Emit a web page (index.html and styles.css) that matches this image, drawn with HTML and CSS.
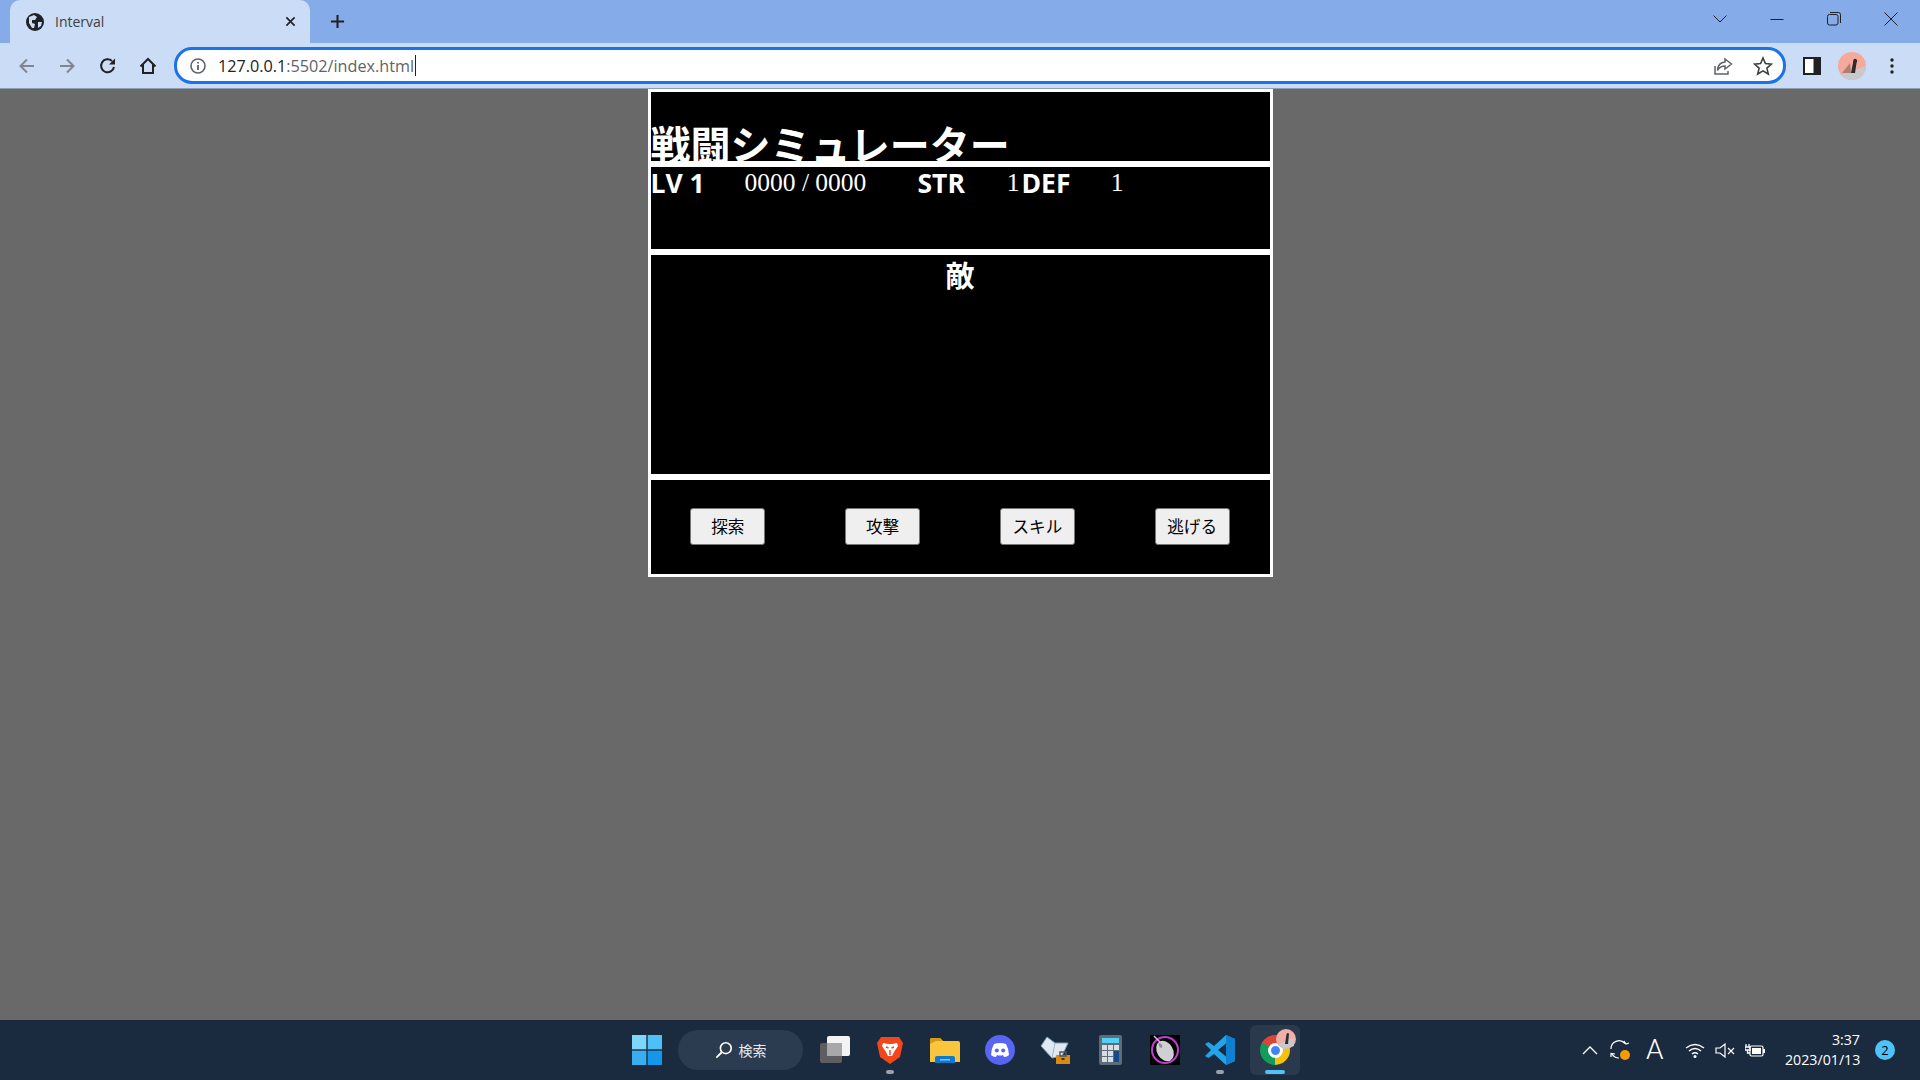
FILE: index.html
```html
<!DOCTYPE html>
<html lang="ja">
  <head>
    <meta charset="UTF-8">
    <title>Interval</title>
    <link rel="stylesheet" href="styles.css">
  </head>
  <body>
    <div class="window">
      <div class="tabbar">
        <div class="tab">
          <svg class="tab-globe" viewBox="0 0 18 18"><circle cx="9" cy="9" r="9" fill="#202124"/><path d="M3 4 L8 2 L11 4 L9 7 L6 7 L6 10 L9 11 L8 15 L6 15 L3 10 Z M12 9 L16 9 L15 13 L12 15 Z" fill="#cbdcf6"/></svg>
          <span class="tab-title">Interval</span>
          <svg class="tab-close" viewBox="0 0 12 12"><path d="M1.5 1.5 L10.5 10.5 M10.5 1.5 L1.5 10.5" stroke="#202124" stroke-width="1.8"/></svg>
        </div>
        <svg class="new-tab" viewBox="0 0 16 16"><path d="M8 1 V15 M1 8 H15" stroke="#202124" stroke-width="2.2"/></svg>
        <div class="window-controls">
          <svg class="win-btn chevron" viewBox="0 0 14 8"><path d="M0.5 0.5 L7 7 L13.5 0.5" fill="none" stroke="#202124" stroke-width="1"/></svg>
          <svg class="win-btn" viewBox="0 0 14 14"><path d="M0.5 7.5 H13.5" stroke="#202124" stroke-width="1"/></svg>
          <svg class="win-btn" viewBox="0 0 14 14"><rect x="0.5" y="2.5" width="10.5" height="10.5" rx="2" fill="none" stroke="#202124"/><path d="M3 0.5 H11.5 Q13.5 0.5 13.5 2.5 V11" fill="none" stroke="#202124"/></svg>
          <svg class="win-btn" viewBox="0 0 14 14"><path d="M0.5 0.5 L13.5 13.5 M13.5 0.5 L0.5 13.5" stroke="#202124" stroke-width="1"/></svg>
        </div>
      </div>
      <div class="toolbar">
        <svg class="tool-icon" viewBox="0 0 20 20"><path d="M17 10 H4 M10 3.5 L3.5 10 L10 16.5" fill="none" stroke="#80868b" stroke-width="2"/></svg>
        <svg class="tool-icon" viewBox="0 0 20 20"><path d="M3 10 H16 M10 3.5 L16.5 10 L10 16.5" fill="none" stroke="#80868b" stroke-width="2"/></svg>
        <svg class="tool-icon" viewBox="0 0 20 20"><path d="M16 11 A6.5 6.5 0 1 1 14 5" fill="none" stroke="#202124" stroke-width="2"/><path d="M17 2.5 V8.5 H11 Z" fill="#202124"/></svg>
        <svg class="tool-icon" viewBox="0 0 20 20"><path d="M2.5 10.5 L10 3 L17.5 10.5 M5 8.5 V17 H15 V8.5" fill="none" stroke="#202124" stroke-width="2"/></svg>
        <div class="omnibox">
          <svg class="info-icon" viewBox="0 0 16 16"><circle cx="8" cy="8" r="7" fill="none" stroke="#5f6368" stroke-width="1.6"/><path d="M8 7 V12 M8 4 V5.6" stroke="#5f6368" stroke-width="1.8"/></svg>
          <span class="url"><span class="url-host">127.0.0.1</span>:5502/index.html</span><span class="caret"></span>
          <svg class="omni-icon share-icon" viewBox="0 0 20 20"><path d="M2 10 V18 H15 V15" fill="none" stroke="#5f6368" stroke-width="1.5"/><path d="M12 3 L18.5 8 L12 13 V10 Q7 10 4.5 14.5 Q5 6.5 12 6 Z" fill="none" stroke="#5f6368" stroke-width="1.5"/></svg>
          <svg class="omni-icon" viewBox="0 0 20 20"><path d="M10 2 L12.4 7.6 L18.5 8.1 L13.9 12.1 L15.3 18 L10 14.9 L4.7 18 L6.1 12.1 L1.5 8.1 L7.6 7.6 Z" fill="none" stroke="#3c4043" stroke-width="1.6"/></svg>
        </div>
        <svg class="panel-icon" viewBox="0 0 18 18"><rect width="18" height="18" fill="#202124"/><rect x="2" y="2" width="8.5" height="14" fill="#fff"/></svg>
        <svg class="avatar" viewBox="0 0 28 28"><defs><clipPath id="avatarClip"><circle cx="14" cy="14" r="14"/></clipPath></defs><g clip-path="url(#avatarClip)"><rect width="28" height="28" fill="#f5a99b"/><path d="M0 24 L28 14 V28 H0 Z" fill="#c9c9cd"/><path d="M4 21 L12 11 L13 21 Z" fill="#b07f70"/><path d="M13 21 L15 11 Q15 6 18 7 Q20 8 18.500 11 L17 21 Z" fill="#2b2b30"/></g></svg>
        <svg class="dots" viewBox="0 0 4 16"><circle cx="2" cy="2" r="1.7" fill="#202124"/><circle cx="2" cy="8" r="1.7" fill="#202124"/><circle cx="2" cy="14" r="1.700" fill="#202124"/></svg>
      </div>

      <main class="page">
        <div class="game">
          <section class="panel title-panel">
            <h1>戦闘シミュレーター</h1>
          </section>
          <section class="panel status-panel">
            <div class="status-row">
              <span class="status-lv">LV 1</span>
              <span class="status-hp">0000 / 0000</span>
              <span class="status-item"><b>STR</b><span class="status-value">1</span></span>
              <span class="status-item"><b>DEF</b><span class="status-value">1</span></span>
            </div>
          </section>
          <section class="panel enemy-panel">
            <h2>敵</h2>
          </section>
          <section class="panel command-panel">
            <button class="command">探索</button>
            <button class="command">攻撃</button>
            <button class="command">スキル</button>
            <button class="command">逃げる</button>
          </section>
        </div>
      </main>

      <footer class="taskbar">
        <div class="task-slot">
          <svg class="task-icon" viewBox="0 0 30 30"><rect width="14.300" height="14.300" fill="#7fd6fb"/><rect x="15.700" width="14.300" height="14.300" fill="#4fc0f6"/><rect y="15.700" width="14.300" height="14.300" fill="#38aef0"/><rect x="15.700" y="15.700" width="14.300" height="14.300" fill="#1297ea"/></svg>
        </div>
        <div class="task-search">
          <svg class="search-icon" viewBox="0 0 20 20"><circle cx="12" cy="8" r="6" fill="none" stroke="#fff" stroke-width="1.800"/><path d="M7.500 12.500 L1.500 18.500" stroke="#fff" stroke-width="2"/></svg>
          <span>検索</span>
        </div>
        <div class="task-slot">
          <svg class="task-icon" viewBox="0 0 30 30"><rect y="8" width="22" height="20" rx="2" fill="#5e5e60"/><rect x="7" y="1" width="23" height="20" rx="2" fill="#f3f3f3"/><rect x="7" y="8" width="15" height="13" fill="#a8a8aa"/></svg>
        </div>
        <div class="task-slot">
          <svg class="task-icon" viewBox="0 0 30 30"><path d="M6 2 H24 L28 8 L25 22 L15 29 L5 22 L2 8 Z" fill="#f1471d"/><path d="M8 8 L13 9 H17 L22 8 L23 11 L19 17 L17 21 H13 L11 17 L7 11 Z" fill="#fff"/><path d="M11 12 L13.500 13 M19 12 L16.500 13 M15 15 V20" stroke="#f1471d" stroke-width="1.500"/></svg>
          <span class="run-dot"></span>
        </div>
        <div class="task-slot">
          <svg class="task-icon" viewBox="0 0 30 30"><path d="M0 5 Q0 3 2 3 H10 L13 6 H28 Q30 6 30 8 V27 H0 Z" fill="#f9c53f"/><path d="M0 5 Q0 3 2 3 H10 L13 6 H6 L0 9 Z" fill="#d69a19"/><path d="M5 23 Q5 21 7 21 H23 Q25 21 25 23 V28 H5 Z" fill="#0f79cf"/><rect x="10" y="24" width="10" height="1.500" fill="#7cc6f5"/></svg>
        </div>
        <div class="task-slot">
          <svg class="task-icon" viewBox="0 0 30 30"><circle cx="15" cy="15" r="15" fill="#5865f2"/><path d="M9 9 Q15 7 21 9 Q24 14 24 20 Q22 22 19 22 L18 20 Q15 21 12 20 L11 22 Q8 22 6 20 Q6 14 9 9 Z" fill="#fff"/><circle cx="11.800" cy="15.500" r="2" fill="#5865f2"/><circle cx="18.200" cy="15.500" r="2" fill="#5865f2"/></svg>
        </div>
        <div class="task-slot">
          <svg class="task-icon" viewBox="0 0 30 30"><path d="M1 11 L7 2 L15 8 L28 8 L22 21 L12 23 Z" fill="#dfe8f3" stroke="#6fa3b8"/><path d="M15 8 L12 23" stroke="#9fb8c8"/><rect x="16" y="20" width="14" height="9" fill="#d98a12"/><rect x="20" y="17" width="6" height="4" fill="none" stroke="#555" stroke-width="1.500"/><rect x="21.500" y="23" width="3" height="2" fill="#4a3205"/></svg>
        </div>
        <div class="task-slot">
          <svg class="calc-icon" viewBox="0 0 23 30"><rect width="23" height="30" rx="2" fill="#5e6c78"/><rect x="3" y="3" width="17" height="5" fill="#55d0f5"/><g fill="#d7dde2"><rect x="3" y="10" width="5" height="5"/><rect x="9" y="10" width="5" height="5"/><rect x="15" y="10" width="5" height="5"/><rect x="3" y="16" width="5" height="5"/><rect x="9" y="16" width="5" height="5"/><rect x="3" y="22" width="5" height="5"/><rect x="9" y="22" width="5" height="5"/></g><rect x="15" y="16" width="5" height="11" fill="#144a8c"/></svg>
        </div>
        <div class="task-slot">
          <svg class="task-icon" viewBox="0 0 30 30"><rect width="30" height="30" fill="#000"/><circle cx="15" cy="15" r="13" fill="none" stroke="#c23dd0" stroke-width="2"/><ellipse cx="15" cy="16" rx="8" ry="11" transform="rotate(-30 15 16)" fill="#cfcfd4"/><path d="M4 1 L10 7" stroke="#e9a6ee" stroke-width="1.500"/><ellipse cx="10.500" cy="10.500" rx="1.500" ry="2.500" transform="rotate(-30 10.500 10.500)" fill="#8d8d94"/></svg>
        </div>
        <div class="task-slot">
          <svg class="task-icon" viewBox="0 0 30 30"><path d="M21 0 L30 4 V26 L21 30 L9 19 L3.500 23 L0 21 L6 15 L0 9 L3.500 7 L9 11 Z M21 8.500 L13 15 L21 21.500 Z" fill="#23a3e8" fill-rule="evenodd"/><path d="M21 0 L30 4 V26 L21 30 V21.500 V8.500 Z" fill="#0f7fcf"/></svg>
          <span class="run-dot"></span>
        </div>
        <div class="task-slot task-active">
          <span class="chrome-icon"><span class="chrome-core"></span></span>
          <svg class="chrome-badge" viewBox="0 0 20 20"><circle cx="10" cy="10" r="10" fill="#eeb0a6"/><path d="M2 15 L18 9 L18 17 L8 20 Z" fill="#c9c9cd"/><path d="M9 15 L10.500 5 Q12 3 13 5 L12 15 Z" fill="#2b2b30"/></svg>
          <span class="run-bar"></span>
        </div>

        <div class="tray">
          <svg class="tray-caret" viewBox="0 0 16 9"><path d="M1 8 L8 1 L15 8" fill="none" stroke="#fff" stroke-width="1.300"/></svg>
          <svg class="tray-sync" viewBox="0 0 20 20"><path d="M1 9 A8 8 0 0 1 15 3.500 M19 3 L16 4 L14 1" fill="none" stroke="#fff" stroke-width="1.200"/><path d="M1 17 L1 13.500 L5 14 M2 14 A8 8 0 0 0 9 18" fill="none" stroke="#fff" stroke-width="1.200"/><circle cx="15" cy="15" r="5" fill="#f79b08"/></svg>
          <span class="tray-ime">A</span>
          <svg class="tray-wifi" viewBox="0 0 20 15"><path d="M1 5 Q10 -2 19 5 M4 8 Q10 3 16 8 M7 11 Q10 8.500 13 11" fill="none" stroke="#fff" stroke-width="1.500"/><circle cx="10" cy="13.500" r="1.500" fill="#fff"/></svg>
          <svg class="tray-mute" viewBox="0 0 20 15"><path d="M1 5 H5 L10 1 V14 L5 10 H1 Z" fill="none" stroke="#fff" stroke-width="1.200"/><path d="M13 5 L19 11 M19 5 L13 11" stroke="#fff" stroke-width="1.200"/></svg>
          <svg class="tray-battery" viewBox="0 0 20 15"><path d="M1 1 V4 M4 1 V4 M0 4 H5 V7 H0 Z M2.500 7 V10 H5" fill="none" stroke="#fff" stroke-width="1.300"/><rect x="5" y="3" width="13" height="10" rx="1.500" fill="none" stroke="#fff" stroke-width="1.200"/><rect x="7" y="5" width="9" height="6" fill="#fff"/><rect x="18" y="6" width="2" height="4" fill="#fff"/></svg>
          <div class="clock">
            <span>3:37</span>
            <span>2023/01/13</span>
          </div>
          <span class="notify-badge">2</span>
        </div>
      </footer>
    </div>
  </body>
</html>
```

FILE: styles.css
```css
* {
  box-sizing: border-box;
}

html,
body {
  height: 100%;
}

body {
  font-family: "Noto Sans CJK JP", "Noto Sans", sans-serif;
  margin: 0;
  overflow: hidden;
}

.window {
  display: flex;
  flex-direction: column;
  height: 100%;
}

/* browser chrome */
.tabbar {
  align-items: flex-start;
  background-color: #85abe9;
  display: flex;
  flex: none;
  height: 43px;
  padding-left: 10px;
}

.tab {
  align-items: center;
  background-color: #cbdcf6;
  border-radius: 10px 10px 0 0;
  display: flex;
  height: 43px;
  padding: 0 14px 0 16px;
  width: 300px;
}

.tab-globe {
  height: 18px;
  width: 18px;
}

.tab-title {
  color: #3c4043;
  flex: 1;
  font-family: "Open Sans", sans-serif;
  font-size: 14px;
  margin-left: 11px;
}

.tab-close {
  height: 11px;
  width: 11px;
}

.new-tab {
  height: 15px;
  margin: 14px 0 0 20px;
  width: 15px;
}

.window-controls {
  align-items: center;
  display: flex;
  gap: 43px;
  margin-left: auto;
  padding: 12px 22px 0 0;
}

.win-btn {
  height: 14px;
  width: 14px;
}

.chevron {
  height: 8px;
}

.toolbar {
  align-items: center;
  background-color: #cbdcf6;
  border-bottom: 1px solid #8e9db5;
  display: flex;
  flex: none;
  height: 46px;
  padding-left: 17px;
}

.tool-icon {
  height: 20px;
  margin-right: 20.330px;
  width: 20px;
}

.omnibox {
  align-items: center;
  background-color: #fff;
  border: 3px solid #1a73e8;
  border-radius: 18px;
  display: flex;
  height: 37px;
  margin-left: -4.300px;
  padding: 0 10px 0 13px;
  width: 1612px;
}

.info-icon {
  height: 16px;
  width: 16px;
}

.url {
  color: #5f6368;
  font-family: "Open Sans", sans-serif;
  font-size: 16.200px;
  margin-left: 12px;
}

.url-host {
  color: #202124;
}

.caret {
  background-color: #202124;
  height: 21px;
  margin-left: 1px;
  width: 1px;
}

.omni-icon {
  height: 20px;
  margin-left: 20px;
  width: 20px;
}

.share-icon {
  margin-left: auto;
}

.panel-icon {
  height: 18px;
  margin-left: 17px;
  width: 18px;
}

.avatar {
  height: 28px;
  margin-left: 17px;
  width: 28px;
}

.dots {
  height: 16px;
  margin-left: 24px;
  width: 4px;
}

/* game page */
.page {
  background-color: #696969;
  flex: 1;
}

.game {
  background-color: #000;
  margin: 0 auto;
  width: 625px;
}

.panel {
  background-color: #000;
  border: 3px solid #fff;
  color: #fff;
}

.title-panel {
  height: 75px;
  overflow: hidden;
}

.title-panel h1 {
  font-size: 40px;
  font-weight: 700;
  line-height: 40px;
  margin: 31px 0 0;
}

.status-panel {
  height: 88px;
}

.status-row {
  align-items: center;
  display: flex;
  font-family: "Open Sans", "Noto Sans CJK JP", sans-serif;
  font-size: 26.500px;
  font-weight: 700;
  line-height: 32px;
}

.status-lv {
  width: 94px;
}

.status-hp {
  font-family: "Liberation Serif", serif;
  font-size: 25.500px;
  font-weight: 400;
  width: 173px;
}

.status-item {
  display: flex;
  justify-content: space-between;
  padding-right: 2px;
  width: 104px;
}

.status-item b {
  font-weight: 700;
}

.status-value {
  font-family: "Liberation Serif", serif;
  font-size: 25.500px;
  font-weight: 400;
}

.enemy-panel {
  height: 225px;
}

.enemy-panel h2 {
  font-size: 29px;
  font-weight: 700;
  line-height: 38px;
  margin: 0;
  text-align: center;
}

.command-panel {
  align-items: center;
  display: flex;
  height: 100px;
  justify-content: space-around;
  padding-bottom: 2px;
}

.command {
  background-color: #efefef;
  border: 1px solid #767676;
  border-radius: 3px;
  color: #000;
  font-family: "Noto Sans CJK JP", sans-serif;
  font-size: 16.600px;
  height: 37px;
  padding: 0 0 1px;
  width: 75px;
}

/* windows taskbar */
.taskbar {
  align-items: center;
  background-color: #1a2b40;
  display: flex;
  flex: none;
  height: 60px;
  padding-left: 619px;
}

.task-slot {
  align-items: center;
  display: flex;
  height: 50px;
  justify-content: center;
  position: relative;
  width: 55px;
}

.task-icon {
  height: 30px;
  width: 30px;
}

.calc-icon {
  height: 30px;
  width: 23px;
}

.task-search {
  align-items: center;
  background-color: #2b3b50;
  border-radius: 20px;
  color: #e8eaed;
  display: flex;
  font-size: 14px;
  height: 40px;
  justify-content: center;
  margin: 0 4.500px 0 4px;
  width: 125px;
}

.search-icon {
  height: 18px;
  margin-right: 6px;
  width: 18px;
}

.run-dot {
  background-color: #9aa0a6;
  border-radius: 2px;
  bottom: 1px;
  height: 4px;
  left: 23.500px;
  position: absolute;
  width: 8px;
}

.task-active {
  background-color: #2a394c;
  border-radius: 6px;
  margin-left: 2.500px;
  width: 50px;
}

.chrome-icon {
  align-items: center;
  background: conic-gradient(#db4437 0deg 60deg, #f4c20d 60deg 180deg, #0f9d58 180deg 300deg, #db4437 300deg);
  border-radius: 50%;
  display: flex;
  height: 30px;
  justify-content: center;
  width: 30px;
}

.chrome-core {
  background-color: #4285f4;
  border: 3px solid #fff;
  border-radius: 50%;
  height: 15px;
  width: 15px;
}

.chrome-badge {
  height: 20px;
  position: absolute;
  right: 4px;
  top: 4px;
  width: 20px;
}

.run-bar {
  background-color: #4fc3f7;
  border-radius: 2px;
  bottom: 1px;
  height: 4px;
  left: 15px;
  position: absolute;
  width: 20px;
}

.tray {
  align-items: center;
  color: #fff;
  display: flex;
  margin-left: auto;
  padding-right: 25px;
}

.tray-caret {
  height: 9px;
  width: 16px;
}

.tray-sync {
  height: 20px;
  margin-left: 12px;
  width: 20px;
}

.tray-ime {
  font-family: Roboto, sans-serif;
  font-size: 28px;
  font-weight: 300;
  line-height: 30px;
  margin-left: 16px;
  width: 17px;
}

.tray-wifi {
  height: 15px;
  margin-left: 22px;
  width: 20px;
}

.tray-mute {
  height: 15px;
  margin-left: 10px;
  width: 20px;
}

.tray-battery {
  height: 15px;
  margin-left: 10px;
  width: 20px;
}

.clock {
  display: flex;
  flex-direction: column;
  font-family: "Open Sans", sans-serif;
  font-size: 14.200px;
  line-height: 20px;
  margin-left: 20px;
  text-align: right;
  width: 75px;
}

.notify-badge {
  background-color: #4fc3f7;
  border-radius: 50%;
  color: #000;
  font-family: "Open Sans", sans-serif;
  font-size: 13px;
  height: 20px;
  line-height: 20px;
  margin-left: 15px;
  text-align: center;
  width: 20px;
}
```
